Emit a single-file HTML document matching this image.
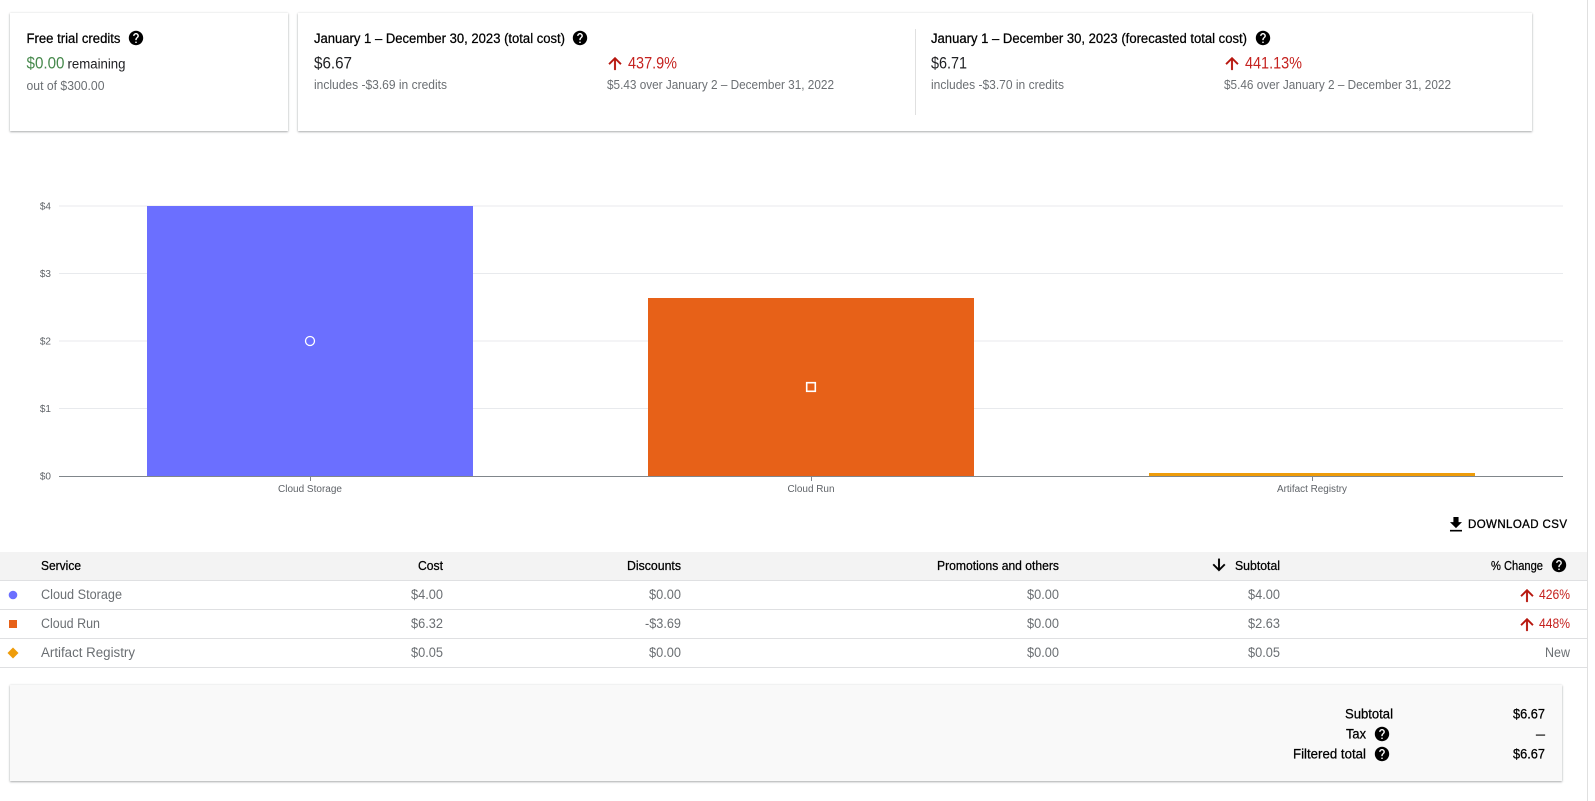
<!DOCTYPE html>
<html lang="en"><head><meta charset="utf-8"><title>Cost report</title>
<style>
html,body{margin:0;padding:0;background:#fff;width:1595px;height:801px;overflow:hidden}
.c{position:absolute;background:#fff;box-shadow:0 1px 2px rgba(60,64,67,.4),0 0 2px rgba(60,64,67,.12)}
svg{position:absolute;left:0;top:0}
text{font-family:"Liberation Sans",Arial,sans-serif;font-size:13.5px;fill:#5f6368}
.m{fill:#000;stroke:#000;stroke-width:.25px}
.b{font-size:16.5px;fill:#202124}
.s{font-size:12.5px;fill:#6b6f73}
.r{font-size:16.5px;fill:#c5221f}
.t{fill:#6b6f73}
.red{fill:#c5221f}
.a{font-size:10px;fill:#5f6368}
.e{text-anchor:end}
.mid{text-anchor:middle}
.hd{font-size:13px}
</style></head><body>
<div class="c" style="left:10px;top:13px;width:278px;height:118px"></div>
<div class="c" style="left:298px;top:13px;width:1234px;height:118px"></div>
<div class="c" style="left:10px;top:685px;width:1552px;height:96px;background:#f9f9f9"></div>
<svg width="1595" height="801" viewBox="0 0 1595 801" xmlns="http://www.w3.org/2000/svg">
<defs>
<g id="h"><path transform="scale(.72) translate(-12 -12)" fill="#000" d="M12 2C6.48 2 2 6.48 2 12s4.48 10 10 10 10-4.48 10-10S17.52 2 12 2zm1 17h-2v-2h2v2zm2.07-7.75l-.9.92C13.45 12.9 13 13.5 13 15h-2v-.5c0-1.1.45-2.1 1.17-2.83l1.24-1.26c.37-.36.59-.86.59-1.41 0-1.1-.9-2-2-2s-2 .9-2 2H8c0-2.21 1.79-4 4-4s4 1.79 4 4c0 .88-.36 1.68-.93 2.25z"/></g>
<g id="u"><path transform="scale(.8) translate(-12 -12)" fill="#b7160e" stroke="#b7160e" stroke-width=".5" d="M4 12l1.41 1.41L11 7.83V20h2V7.83l5.58 5.59L20 12l-8-8-8 8z"/></g>
</defs>
<rect x="1587" y="0" width="1" height="801" fill="#e0e0e0"/>

<!-- cards -->
<text class="m" x="26.5" y="43" textLength="94" lengthAdjust="spacingAndGlyphs">Free trial credits</text>
<use href="#h" x="136" y="38"/>
<text x="26.5" y="68.5" class="b" style="fill:#46894c" textLength="38" lengthAdjust="spacingAndGlyphs">$0.00</text>
<text x="67.5" y="68.5" style="fill:#202124" textLength="58" lengthAdjust="spacingAndGlyphs">remaining</text>
<text x="26.5" y="90" class="s" textLength="78" lengthAdjust="spacingAndGlyphs">out of $300.00</text>

<text class="m" x="314" y="43" textLength="251" lengthAdjust="spacingAndGlyphs">January 1 – December 30, 2023 (total cost)</text>
<use href="#h" x="580" y="38"/>
<text x="314" y="68.5" class="b" textLength="38" lengthAdjust="spacingAndGlyphs">$6.67</text>
<text x="314" y="89" class="s" textLength="133" lengthAdjust="spacingAndGlyphs">includes -$3.69 in credits</text>
<use href="#u" x="615" y="63.5"/>
<text x="628" y="68.5" class="r" textLength="49" lengthAdjust="spacingAndGlyphs">437.9%</text>
<text x="607" y="89" class="s" textLength="227" lengthAdjust="spacingAndGlyphs">$5.43 over January 2 – December 31, 2022</text>

<rect x="915" y="29" width="1" height="86" fill="#e0e0e0"/>
<text class="m" x="931" y="43" textLength="316" lengthAdjust="spacingAndGlyphs">January 1 – December 30, 2023 (forecasted total cost)</text>
<use href="#h" x="1263" y="38"/>
<text x="931" y="68.5" class="b" textLength="36" lengthAdjust="spacingAndGlyphs">$6.71</text>
<text x="931" y="89" class="s" textLength="133" lengthAdjust="spacingAndGlyphs">includes -$3.70 in credits</text>
<use href="#u" x="1232" y="63.5"/>
<text x="1245" y="68.5" class="r" textLength="57" lengthAdjust="spacingAndGlyphs">441.13%</text>
<text x="1224" y="89" class="s" textLength="227" lengthAdjust="spacingAndGlyphs">$5.46 over January 2 – December 31, 2022</text>

<!-- chart -->
<g fill="#e8eaed">
<rect x="59" y="205.5" width="1504" height="1"/>
<rect x="59" y="273" width="1504" height="1"/>
<rect x="59" y="340.5" width="1504" height="1"/>
<rect x="59" y="408" width="1504" height="1"/>
</g>
<text class="a e" x="51" y="209.5">$4</text>
<text class="a e" x="51" y="277">$3</text>
<text class="a e" x="51" y="344.5">$2</text>
<text class="a e" x="51" y="412">$1</text>
<text class="a e" x="51" y="479.5">$0</text>
<rect x="147" y="206" width="326" height="270.5" fill="#6b6fff"/>
<rect x="648" y="298" width="326" height="178.5" fill="#e76118"/>
<rect x="1149" y="473" width="326" height="3.5" fill="#ee9c0a"/>
<circle cx="310" cy="341" r="4.5" fill="none" stroke="#fff" stroke-width="1.3"/>
<rect x="806.7" y="382.7" width="8.6" height="8.6" fill="none" stroke="#fff" stroke-width="1.6"/>
<rect x="59" y="476" width="1504" height="1" fill="#80868b"/>
<g fill="#80868b">
<rect x="310" y="477" width="1" height="4"/>
<rect x="811" y="477" width="1" height="4"/>
<rect x="1312" y="477" width="1" height="4"/>
</g>
<text class="a mid" x="310" y="492" textLength="64" lengthAdjust="spacingAndGlyphs">Cloud Storage</text>
<text class="a mid" x="811" y="492" textLength="47" lengthAdjust="spacingAndGlyphs">Cloud Run</text>
<text class="a mid" x="1312" y="492" textLength="70" lengthAdjust="spacingAndGlyphs">Artifact Registry</text>

<!-- download -->
<path transform="translate(1445.7 514.4) scale(.857)" fill="#000" d="M19 9h-4V3H9v6H5l7 7 7-7zM5 18v2h14v-2H5z"/>
<text class="m" x="1468" y="528" style="font-size:11.5px;stroke-width:.3px" textLength="99" lengthAdjust="spacing">DOWNLOAD CSV</text>

<!-- table -->
<rect x="0" y="552" width="1587" height="28" fill="#f3f3f3"/>
<g fill="#dfe0e2">
<rect x="0" y="580" width="1587" height="1"/>
<rect x="0" y="609" width="1587" height="1"/>
<rect x="0" y="638" width="1587" height="1"/>
<rect x="0" y="667" width="1587" height="1"/>
</g>
<text class="m hd" x="41" y="570" textLength="40" lengthAdjust="spacingAndGlyphs">Service</text>
<text class="m hd e" x="443" y="570" textLength="25" lengthAdjust="spacingAndGlyphs">Cost</text>
<text class="m hd e" x="681" y="570" textLength="54" lengthAdjust="spacingAndGlyphs">Discounts</text>
<text class="m hd e" x="1059" y="570" textLength="122" lengthAdjust="spacingAndGlyphs">Promotions and others</text>
<text class="m hd e" x="1280" y="570" textLength="45" lengthAdjust="spacingAndGlyphs">Subtotal</text>
<text class="m hd e" x="1543" y="570" textLength="52" lengthAdjust="spacingAndGlyphs">% Change</text>
<path transform="translate(1219 565) scale(.78) translate(-12 -12)" fill="#000" stroke="#000" stroke-width=".5" d="M20 12l-1.41-1.41L13 16.17V4h-2v12.17l-5.58-5.59L4 12l8 8 8-8z"/>
<use href="#h" x="1559" y="565"/>

<circle cx="13" cy="595" r="4.3" fill="#6b6fff"/>
<rect x="9" y="620" width="8" height="8" fill="#e76118"/>
<path d="M13 647.5l5.5 5.5-5.5 5.5-5.5-5.5z" fill="#ee9c0a"/>

<text class="t" x="41" y="599" textLength="81" lengthAdjust="spacingAndGlyphs">Cloud Storage</text>
<text class="t" x="41" y="628" textLength="59" lengthAdjust="spacingAndGlyphs">Cloud Run</text>
<text class="t" x="41" y="657" textLength="94" lengthAdjust="spacingAndGlyphs">Artifact Registry</text>

<text class="t e" x="443" y="599" textLength="32" lengthAdjust="spacingAndGlyphs">$4.00</text>
<text class="t e" x="443" y="628" textLength="32" lengthAdjust="spacingAndGlyphs">$6.32</text>
<text class="t e" x="443" y="657" textLength="32" lengthAdjust="spacingAndGlyphs">$0.05</text>
<text class="t e" x="681" y="599" textLength="32" lengthAdjust="spacingAndGlyphs">$0.00</text>
<text class="t e" x="681" y="628" textLength="36" lengthAdjust="spacingAndGlyphs">-$3.69</text>
<text class="t e" x="681" y="657" textLength="32" lengthAdjust="spacingAndGlyphs">$0.00</text>
<text class="t e" x="1059" y="599" textLength="32" lengthAdjust="spacingAndGlyphs">$0.00</text>
<text class="t e" x="1059" y="628" textLength="32" lengthAdjust="spacingAndGlyphs">$0.00</text>
<text class="t e" x="1059" y="657" textLength="32" lengthAdjust="spacingAndGlyphs">$0.00</text>
<text class="t e" x="1280" y="599" textLength="32" lengthAdjust="spacingAndGlyphs">$4.00</text>
<text class="t e" x="1280" y="628" textLength="32" lengthAdjust="spacingAndGlyphs">$2.63</text>
<text class="t e" x="1280" y="657" textLength="32" lengthAdjust="spacingAndGlyphs">$0.05</text>
<use href="#u" x="1527" y="595.5"/>
<use href="#u" x="1527" y="624.5"/>
<text class="red e" x="1570" y="599" textLength="31" lengthAdjust="spacingAndGlyphs">426%</text>
<text class="red e" x="1570" y="628" textLength="31" lengthAdjust="spacingAndGlyphs">448%</text>
<text class="t e" x="1570" y="657" textLength="25" lengthAdjust="spacingAndGlyphs">New</text>

<!-- totals -->
<text class="m e" x="1393" y="718.5" textLength="48" lengthAdjust="spacingAndGlyphs">Subtotal</text>
<text class="m e" x="1366" y="738.5" textLength="20" lengthAdjust="spacingAndGlyphs">Tax</text>
<text class="m e" x="1366" y="758.5" textLength="73" lengthAdjust="spacingAndGlyphs">Filtered total</text>
<use href="#h" x="1382" y="734"/>
<use href="#h" x="1382" y="754"/>
<text class="m e" x="1545" y="718.5" textLength="32" lengthAdjust="spacingAndGlyphs">$6.67</text>
<text class="m e" x="1545" y="738.5" textLength="9" lengthAdjust="spacingAndGlyphs">–</text>
<text class="m e" x="1545" y="758.5" textLength="32" lengthAdjust="spacingAndGlyphs">$6.67</text>
</svg>
</body></html>
